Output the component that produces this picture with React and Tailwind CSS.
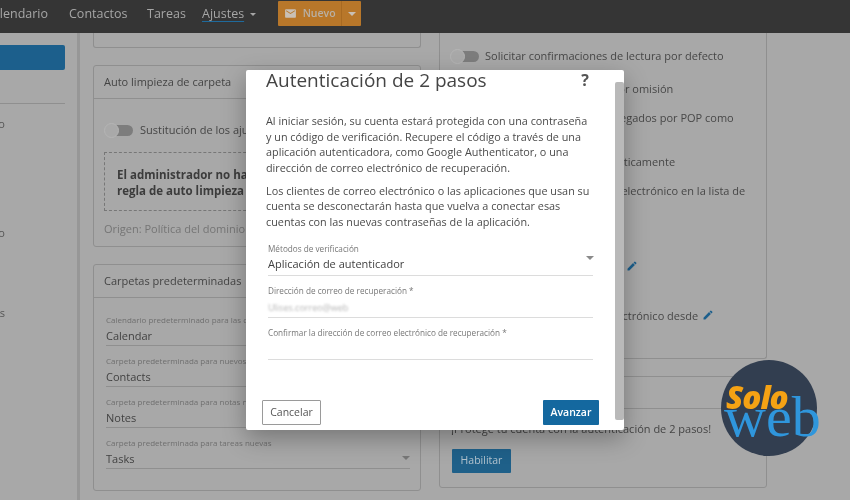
const font = { fontFamily: '"Open Sans", sans-serif' };

function Toggle() {
  return (
    <span className="relative flex h-[15px] w-[29px] shrink-0 items-center">
      <span className="ml-[6px] h-[11px] w-[23px] rounded-full bg-[#7d7d7d]" />
      <span className="absolute left-0 top-0 h-[15px] w-[15px] rounded-full border border-[#b5b5b5] bg-[#a9a9a9]" />
    </span>
  );
}

function Pencil() {
  return (
    <svg viewBox="0 0 24 24" className="ml-[4px] inline h-[12px] w-[12px] fill-[#1c5f8c] align-[-1px]">
      <path d="M3 17.25V21h3.75L17.81 9.94l-3.75-3.75L3 17.25zM20.71 7.04a1 1 0 0 0 0-1.41l-2.34-2.34a1 1 0 0 0-1.41 0l-1.83 1.83 3.75 3.75 1.83-1.83z" />
    </svg>
  );
}

function Caret({ className }) {
  return <span className={"h-0 w-0 border-x-[4px] border-t-[4px] border-x-transparent " + className} />;
}

function FolderField({ label, value, caret }) {
  return (
    <div className="relative h-[41px] border-b border-[#8f8f8f] pt-[8px]">
      <div className="h-[15px] text-[8px] leading-[13px] text-[#6f6f6f] whitespace-nowrap">{label}</div>
      <div className="text-[11px] leading-[16px] text-[#424242]">{value}</div>
      {caret && <Caret className="absolute right-[0px] top-[28px] border-t-[#777]" />}
    </div>
  );
}

function ModalField({ label, children, caret, h }) {
  return (
    <div className={"relative border-b border-[#dcdcdc] " + h}>
      <div className="text-[8.2px] leading-[12px] text-[#777] whitespace-nowrap">{label}</div>
      {children}
      {caret && <Caret className="absolute right-[-1px] top-[13px] border-t-[#8a8a8a]" />}
    </div>
  );
}

export default function App() {
  return (
    <div style={font} className="relative h-[500px] w-[850px] overflow-hidden bg-[#a8a8a8] text-[#454545] blur-[0.35px]">
      <header className="flex h-[33px] items-center overflow-hidden bg-[#353535] pb-[4px] text-[12.5px] text-[#a6a6a6]">
        <span className="ml-[-15px] w-[84px]">Calendario</span>
        <span className="w-[78px]">Contactos</span>
        <span className="w-[55px]">Tareas</span>
        <span className="underline decoration-[#1f6a9c] underline-offset-[3px]">Ajustes</span>
        <span className="ml-[6px] h-0 w-0 border-x-[3px] border-t-[3px] border-x-transparent border-t-[#a6a6a6]" />
        <div className="ml-[22px] mt-[1px] flex h-[25px] w-[83px] items-center self-start rounded-[1px] bg-[#b8772a]">
          <span className="flex h-full w-[64px] items-center justify-center gap-[6px] border-r border-[#a86a22] text-[10.5px] font-semibold text-[#b8b0a5]">
            <svg viewBox="0 0 24 24" className="h-[13px] w-[13px] fill-[#c9c0b5]">
              <path d="M20 4H4c-1.1 0-1.99.9-1.99 2L2 18c0 1.1.9 2 2 2h16c1.1 0 2-.9 2-2V6c0-1.1-.9-2-2-2zm0 4l-8 5-8-5V6l8 5 8-5v2z" />
            </svg>
            Nuevo
          </span>
          <Caret className="ml-[6px] border-t-[#c9c0b5]" />
        </div>
      </header>

      <div className="flex h-[467px] text-[11px]">
        <aside className="h-full w-[80px] shrink-0 overflow-hidden border-r-[3px] border-[#979797] pr-[12px] pt-[12px]">
          <div className="h-[25px] rounded-r-[2px] bg-[#1c5f8c]" />
          <div className="mt-[33px] border-t border-[#8f8f8f]" />
          <div className="flex w-[5px] flex-col items-end whitespace-nowrap text-[11px] leading-[16px] text-[#555]">
            <span className="mt-[12px]">Correo</span>
            <span className="mt-[93px]">Calendario</span>
            <span className="mt-[64px]">Contraseñas</span>
          </div>
        </aside>

        <main className="flex gap-[18px] pl-[13px]">
          <div className="flex w-[328px] flex-col gap-[17px]">
            <div className="h-[15px] rounded-b-[3px] border border-t-0 border-[#8f8f8f]" />

            <section className="h-[182px] rounded-[3px] border border-[#8f8f8f]">
              <div className="flex h-[33px] items-center border-b border-[#8f8f8f] pl-[10px] text-[11px] text-[#444]">Auto limpieza de carpeta</div>
              <div className="px-[10px]">
                <div className="mt-[23px] flex items-center gap-[7px] whitespace-nowrap">
                  <Toggle />
                  Sustitución de los ajustes
                </div>
                <div className="mt-[13px] h-[59px] border border-dashed border-[#777] px-[12px] py-[14px] text-[11.5px] font-bold leading-[16px] text-[#3c3c3c]">
                  El administrador no ha definido una<br />regla de auto limpieza
                </div>
                <div className="mt-[10px] text-[11px] text-[#757575]">Origen: Política del dominio</div>
              </div>
            </section>

            <section className="h-[227px] rounded-[3px] border border-[#8f8f8f]">
              <div className="flex h-[33px] items-center border-b border-[#8f8f8f] pl-[10px] text-[11px] text-[#444]">Carpetas predeterminadas</div>
              <div className="pl-[12px] pr-[10px] pt-[7px]">
                <FolderField label="Calendario predeterminado para las citas" value="Calendar" />
                <FolderField label="Carpeta predeterminada para nuevos contactos" value="Contacts" />
                <FolderField label="Carpeta predeterminada para notas nuevas" value="Notes" />
                <FolderField label="Carpeta predeterminada para tareas nuevas" value="Tasks" caret />
              </div>
            </section>
          </div>

          <div className="flex w-[328px] flex-col gap-[17px]">
            <section className="relative h-[326px] rounded-b-[3px] border border-t-0 border-[#8f8f8f] pl-[10px] pt-[15px] text-[#474747]">
              <div className="flex items-center gap-[6px] whitespace-nowrap">
                <Toggle />
                Solicitar confirmaciones de lectura por defecto
              </div>
              <div className="mt-[16px] whitespace-nowrap pl-[38px]">Guardar los borradores por omisión</div>
              <div className="mt-[13px] whitespace-nowrap pl-[36px]">Mostrar los mensajes entregados por POP como</div>
              <div className="mt-[27px] whitespace-nowrap pl-[40px]">Vaciar la papelera automáticamente</div>
              <div className="mt-[13px] whitespace-nowrap pl-[80px]">Agregar el correo electrónico en la lista de</div>
              <div className="mt-[59px] whitespace-nowrap pl-[56px]">Firma predeterminada<Pencil /></div>
              <div className="mt-[33px] whitespace-nowrap pl-[19px]">Enviar mensajes de correo electrónico desde<Pencil /></div>
            </section>

            <section className="h-[112px] rounded-[3px] border border-[#8f8f8f]">
              <div className="flex h-[32px] items-center border-b border-[#8f8f8f] pl-[11px]">Autenticación de 2 pasos</div>
              <div className="px-[11px]">
                <div className="mt-[12px] whitespace-nowrap">¡Protege tu cuenta con la autenticación de 2 pasos!</div>
                <button className="ml-[1px] mt-[11px] h-[24px] w-[59px] rounded-[1px] bg-[#1f6089] text-[10.5px] text-[#b4c4cf]">Habilitar</button>
              </div>
            </section>
          </div>
        </main>
      </div>

      {/* Modal */}
      <div className="absolute left-[246px] top-[70px] flex h-[360px] w-[378px] overflow-hidden rounded-[2px] bg-white shadow-[0_8px_24px_rgba(0,0,0,0.3)]">
        <div className="flex h-full w-[369px] flex-col pl-[20px]">
          <div className="flex h-[20px] items-center justify-between pr-[26px]">
            <h2 className="text-[19px] font-normal leading-[22px] text-[#454545]">Autenticación de 2 pasos</h2>
            <span className="text-[16px] font-bold text-[#555]">?</span>
          </div>
          <div className="mt-[23px] pr-[22px] text-[10.84px] leading-[15.6px] text-[#4a4a4a]">
            <p>Al iniciar sesión, su cuenta estará protegida con una contraseña y un código de verificación. Recupere el código a través de una aplicación autenticadora, como Google Authenticator, o una dirección de correo electrónico de recuperación.</p>
            <p className="mt-[7.5px]">Los clientes de correo electrónico o las aplicaciones que usan su cuenta se desconectarán hasta que vuelva a conectar esas cuentas con las nuevas contraseñas de la aplicación.</p>
          </div>
          <div className="ml-[2px] mr-[22px] mt-[13px] flex flex-col gap-[9px]">
            <ModalField h="h-[33px]" label="Métodos de verificación" caret>
              <div className="mt-[1px] text-[11px] leading-[16px] text-[#3f3f3f]">Aplicación de autenticador</div>
            </ModalField>
            <ModalField h="h-[33px]" label="Dirección de correo de recuperación *">
              <div className="mt-[4px] text-[9px] leading-[14px] text-[#b5b5b5] blur-[1px]">Ulises.correo@web</div>
            </ModalField>
            <ModalField h="h-[33px]" label="Confirmar la dirección de correo electrónico de recuperación *" />
          </div>
          <div className="mb-[5px] ml-[-4px] mr-[16px] mt-auto flex justify-between">
            <button className="h-[25px] w-[59px] rounded-[1px] border border-[#9a9a9a] text-[10.5px] text-[#555]">Cancelar</button>
            <button className="h-[25px] w-[56px] rounded-[1px] bg-[#14689f] text-[10.5px] font-semibold text-white">Avanzar</button>
          </div>
        </div>
        <div className="mb-[10px] mt-[12px] w-[9px] rounded-[2px] bg-[#b9b9b9]" />
      </div>

      {/* Logo */}
      <div className="absolute left-[721px] top-[360px] h-[96px] w-[96px] rounded-full bg-[#323e50]">
        <span className="absolute left-[3px] top-[28px] text-[58px] leading-[58px] text-[#2f96dc]" style={{ fontFamily: '"Liberation Serif", serif' }}>web</span>
        <span className="absolute left-[5px] top-[18px] text-[31.5px] font-extrabold italic leading-[38px] tracking-[-1px] text-[#f5a214]">Solo</span>
      </div>
    </div>
  );
}
